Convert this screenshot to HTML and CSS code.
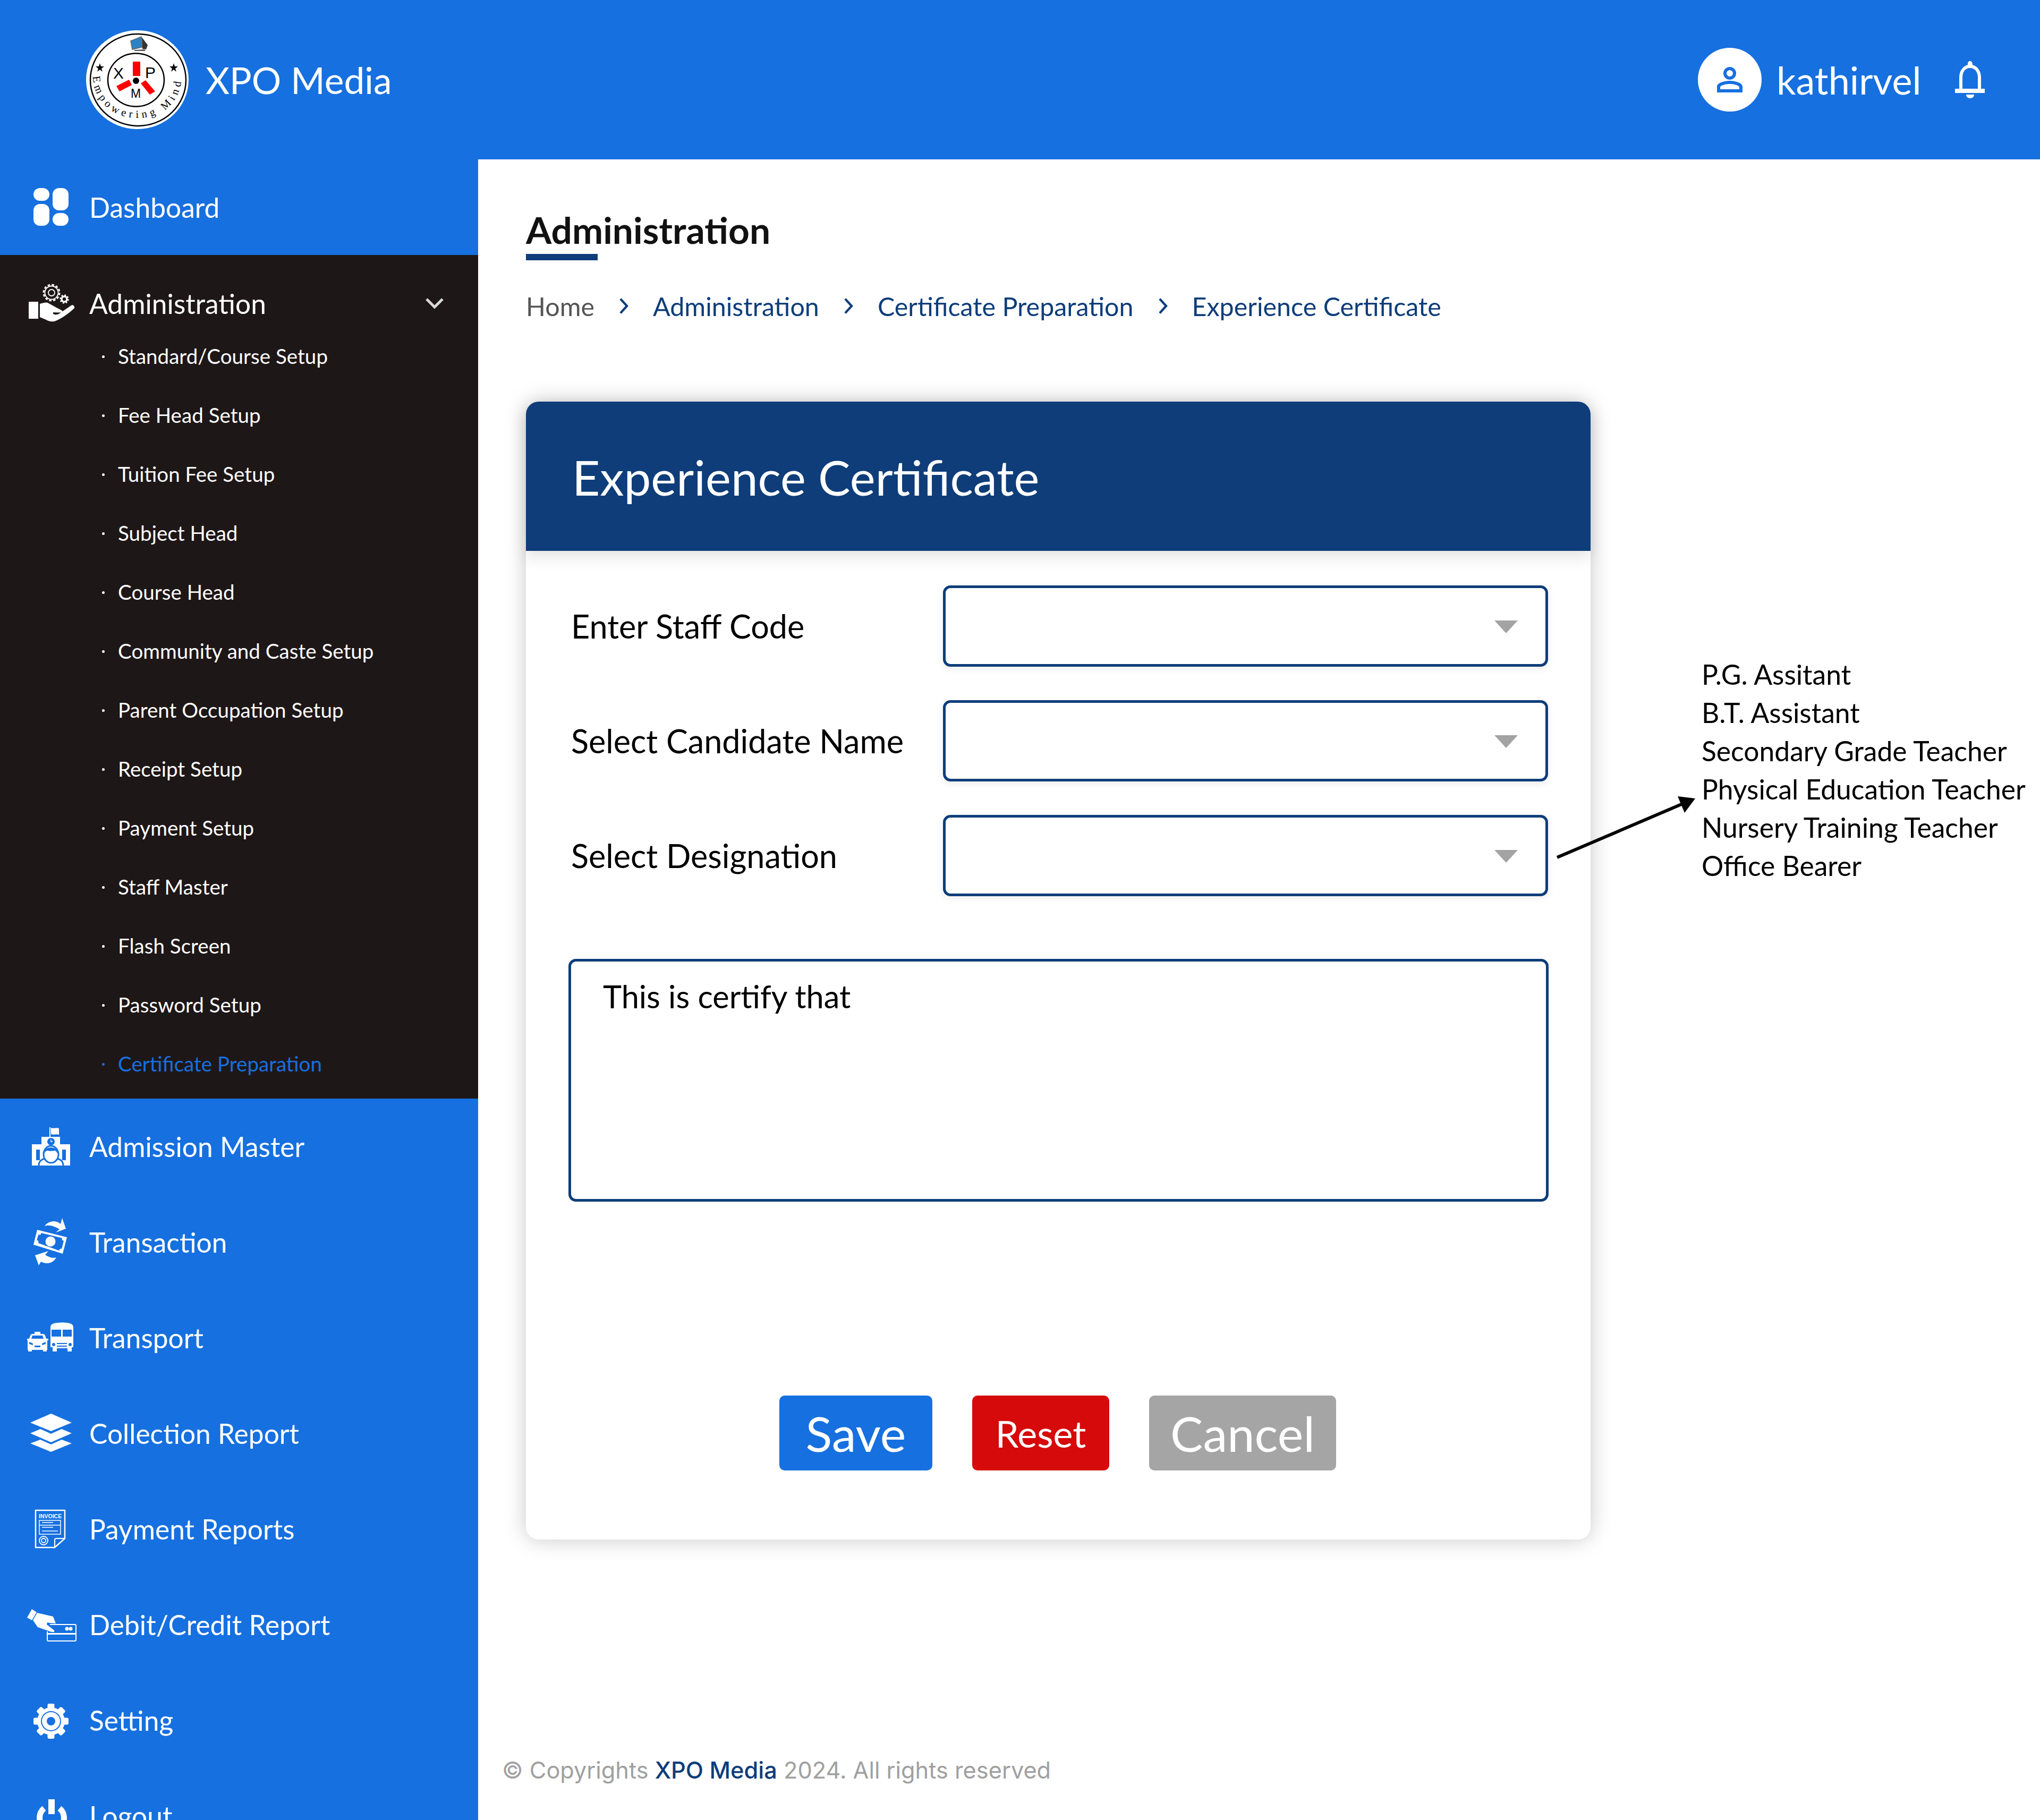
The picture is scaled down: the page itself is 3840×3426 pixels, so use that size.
FILE: index.html
```html
<!DOCTYPE html>
<html lang="en">
<head>
<meta charset="UTF-8" />
<meta name="viewport" content="width=device-width, initial-scale=1" />
<title>XPO Media - Experience Certificate</title>
<link rel="stylesheet" href="styles.css">
</head>
<body>

<header class="topbar">
  <div class="brand">
    <svg class="logo" viewBox="0 0 193 186">
      <defs>
        <path id="logoArc" d="M13 84 C13 134 50 165 97 165 C144 165 180 134 180 84" fill="none"/>
      </defs>
      <ellipse cx="96.5" cy="93" rx="96.5" ry="93" fill="#fff"/>
      <ellipse cx="98" cy="93.5" rx="90" ry="86.5" fill="none" stroke="#000" stroke-width="2.5"/>
      <ellipse cx="94" cy="93.5" rx="53" ry="50" fill="none" stroke="#000" stroke-width="2.5"/>
      <polygon points="84,20 104,12 105,32 87,36" fill="#2a83c9" stroke="#666" stroke-width="1.5"/>
      <polygon points="105,13 116,28 113,36 106,35" fill="#333"/>
      <polygon points="90,37 110,36 112,39 92,39" fill="#555"/>
      <polygon points="26,62 28,68 34,68 29,72 31,78 26,74 21,78 23,72 18,68 24,68" fill="#000"/>
      <polygon points="165,62 167,68 173,68 168,72 170,78 165,74 160,78 162,72 157,68 163,68" fill="#000"/>
      <rect x="88" y="59" width="14" height="27" fill="#f00"/>
      <polygon points="57,105 81,93 86,103 63,115" fill="#f00"/>
      <polygon points="103,100 112,94 130,115 120,121" fill="#f00"/>
      <circle cx="94" cy="95" r="6" fill="#000"/>
      <text class="logo-letter" x="51" y="91">X</text>
      <text class="logo-letter" x="111" y="90">P</text>
      <text class="logo-letter logo-m" x="84" y="127">M</text>
      <text class="logo-motto"><textPath href="#logoArc" startOffset="1%">Empowering Mind</textPath></text>
    </svg>
    <span class="brand-name">XPO Media</span>
  </div>
  <div class="user-box">
    <span class="avatar">
      <svg viewBox="0 0 48 48" width="48" height="48"><path d="M24 0a12 12 0 1 1 0 24a12 12 0 0 1 0-24zm0 6a6 6 0 1 0 0 12a6 6 0 0 0 0-12zM24 26c10 0 24 4 24 11v11H0V37c0-7 14-11 24-11zm0 6c-8 0-18 3-18 6v4h36v-4c0-3-10-6-18-6z" fill="#1670e0" fill-rule="evenodd"/></svg>
    </span>
    <span class="user-name">kathirvel</span>
    <svg class="bell" viewBox="0 0 56 70"><path d="M28 0c3 0 5 2 5 7c10 3 16 12 16 24v21h7v8H0v-8h8V31C8 19 14 10 24 7c0-5 1-7 4-7zm0 13c-9 0-14 8-14 18v21h29V31c0-10-5-18-15-18zM21 63h15c0 4-3 7-7.500 7s-7.500-3-7.500-7z" fill="#fff" fill-rule="evenodd"/></svg>
  </div>
</header>

<div class="layout">
  <nav class="sidebar">
    <a class="nav-item">
      <svg class="nav-icon" viewBox="0 0 90 90"><g fill="#fff"><rect x="13" y="9" width="30" height="24" rx="12"/><rect x="13" y="39" width="30" height="41" rx="12"/><rect x="49" y="9" width="30" height="42" rx="12"/><rect x="49" y="56" width="30" height="24" rx="12"/></g></svg>
      <span>Dashboard</span>
    </a>

    <div class="nav-group">
      <a class="nav-item nav-head">
        <svg class="nav-icon" viewBox="0 0 90 90">
          <rect x="4" y="42" width="18" height="32" fill="#fff"/>
          <path d="M25 46C31 44 36 43 40 44L58 54C64 57 69 59 67 61C66 63 56 62 50 62L50 65C56 68 60 65 62 64L84 49C87 47 91 50 90 54C80 64 62 76 52 79C46 80 40 78 37 76L25 71Z" fill="#fff"/>
          <g fill="none" stroke="#fff">
            <circle cx="47" cy="25" r="12.500" stroke-width="1.800"/>
            <circle cx="47" cy="25" r="15" stroke-width="3" stroke-dasharray="4.500 3.350"/>
            <circle cx="47" cy="25" r="6" stroke-width="1.800"/>
            <circle cx="71" cy="37" r="5" stroke-width="3.500"/>
            <circle cx="71" cy="37" r="7.500" stroke-width="2.500" stroke-dasharray="3 2.890"/>
          </g>
        </svg>
        <span>Administration</span>
        <svg class="chevron" viewBox="0 0 36 24"><path d="M3 4l15 15L33 4" fill="none" stroke="#d9d9d9" stroke-width="5"/></svg>
      </a>
      <ul class="sub-menu">
        <li>Standard/Course Setup</li>
        <li>Fee Head Setup</li>
        <li>Tuition Fee Setup</li>
        <li>Subject Head</li>
        <li>Course Head</li>
        <li>Community and Caste Setup</li>
        <li>Parent Occupation Setup</li>
        <li>Receipt Setup</li>
        <li>Payment Setup</li>
        <li>Staff Master</li>
        <li>Flash Screen</li>
        <li>Password Setup</li>
        <li class="current">Certificate Preparation</li>
      </ul>
    </div>

    <a class="nav-item">
      <svg class="nav-icon" viewBox="0 0 90 90">
        <rect x="43" y="9" width="2" height="27" fill="#fff"/>
        <path d="M46 10c5 2 10-1 15 1v12c-5-2-10 1-15-1z" fill="#fff"/>
        <path d="M28 27h35v14h19v40H10V41h18z" fill="#fff"/>
        <circle cx="46" cy="36" r="7" fill="#1670e0"/>
        <path d="M46 32v4h3" fill="none" stroke="#fff" stroke-width="1.300"/>
        <rect x="18" y="51" width="7" height="20" fill="#1670e0"/>
        <rect x="67" y="51" width="7" height="20" fill="#1670e0"/>
        <path d="M23 81c0-9 7-13 14-13h18c7 0 14 4 14 13" fill="#fff" stroke="#1670e0" stroke-width="3"/>
        <ellipse cx="46" cy="60" rx="14" ry="16" fill="#fff" stroke="#1670e0" stroke-width="3"/>
        <path d="M34 58c0-8 5-11 12-11s12 3 12 11c-2-3-3-5-5-5c-5 1-10 1-14 0c-2 0-4 2-5 5z" fill="#1670e0"/>
      </svg>
      <span>Admission Master</span>
    </a>
    <a class="nav-item">
      <svg class="nav-icon" viewBox="0 0 90 90">
        <g fill="#fff">
          <path d="M34 15C40 6 54 2 64 11L67 0L74 20L55 27L62 21C52 15 42 12 34 15Z"/>
          <path d="M56 74C50 85 38 88 27 82L23 89L16 70L41 62L35 69C42 74 50 76 56 74Z"/>
          <polygon points="20,22 76,36 68,67 13,50"/>
        </g>
        <polygon points="23.500,27 71,38.500 65,62.500 18,45.500" fill="#1670e0"/>
        <g fill="#fff">
          <circle cx="45" cy="44" r="9.500"/>
          <circle cx="24" cy="28" r="3.500"/>
          <circle cx="70" cy="39" r="3.500"/>
          <circle cx="65" cy="61" r="3.500"/>
          <circle cx="19" cy="45" r="3.500"/>
        </g>
      </svg>
      <span>Transaction</span>
    </a>
    <a class="nav-item">
      <svg class="nav-icon" viewBox="0 0 90 90">
        <path d="M45 26c0-5 3-7 7-8c9-2 22-2 29 0c4 1 7 3 7 8v37h-3v8h-8v-6H57v6h-8v-8h-4zM47 30v13h18V30zM68 30v13h17V30zM57 55v2h19v-2zM57 60v2h19v-2z" fill="#fff" fill-rule="evenodd"/>
        <circle cx="51" cy="58" r="3" fill="#1670e0"/>
        <circle cx="82" cy="58" r="3" fill="#1670e0"/>
        <path d="M15 34h11v4h5c2 0 3 1 4 3l2 6h4v3h-2v18h-1v3h-7v-3H10v3H3v-3H2V50H1v-3h4l2-6c1-2 2-3 4-3h4zM11 41l-2 6h23l-2-6zM5 53v4l7 2v-3zM36 53l-7 3v3l7-2zM15 60v3h11v-3z" fill="#fff" fill-rule="evenodd"/>
      </svg>
      <span>Transport</span>
    </a>
    <a class="nav-item">
      <svg class="nav-icon" viewBox="0 0 90 90"><g fill="#fff"><polygon points="46,8 85,25 46,41 7,25"/><polygon points="26,37 46,46 66,37 85,45 46,62 7,45"/><polygon points="26,57 46,66 66,57 85,64 46,80 7,64"/></g></svg>
      <span>Collection Report</span>
    </a>
    <a class="nav-item">
      <svg class="nav-icon" viewBox="0 0 90 90">
        <path d="M17 10h55v53L53 80H17z" fill="none" stroke="#fff" stroke-width="2.500" stroke-linejoin="round"/>
        <text class="invoice-text" x="23" y="25">INVOICE</text>
        <g fill="none" stroke="#fff">
          <rect x="24" y="29" width="40" height="26" stroke-width="1.500"/>
          <path d="M29 33h21M24 38h40M29 42h21M29 49h30" stroke-width="1.500"/>
          <circle cx="32" cy="67" r="8" stroke-width="1.800"/>
          <circle cx="32" cy="67" r="4" stroke-width="1.800"/>
          <path d="M53 80V66c0-2 1-3 3-3h16" stroke-width="2"/>
        </g>
      </svg>
      <span>Payment Reports</span>
    </a>
    <a class="nav-item">
      <svg class="nav-icon" viewBox="0 0 90 90">
        <polygon points="10,16 1,32 10,37 19,22" fill="#fff"/>
        <path d="M20 23L50 30L55 43L43 42L39 41L38 45L52 56C54 60 48 60 41 57L21 50L12 37Z" fill="#fff"/>
        <path d="M44 45H91C92 45 93 46 93 47V74C93 75 92 76 91 76H41C40 76 39 75 39 74V58" fill="none" stroke="#fff" stroke-width="2"/>
        <rect x="39" y="61" width="54" height="3" fill="#fff"/>
        <circle cx="76" cy="53" r="3.500" fill="#fff"/>
        <circle cx="83" cy="53" r="3.500" fill="#fff"/>
      </svg>
      <span>Debit/Credit Report</span>
    </a>
    <a class="nav-item">
      <svg class="nav-icon" viewBox="0 0 90 90">
        <g fill="#fff">
          <circle cx="46" cy="47" r="26"/>
          <rect x="39.500" y="14" width="13" height="66" rx="3"/>
          <rect x="39.500" y="14" width="13" height="66" rx="3" transform="rotate(45 46 47)"/>
          <rect x="39.500" y="14" width="13" height="66" rx="3" transform="rotate(90 46 47)"/>
          <rect x="39.500" y="14" width="13" height="66" rx="3" transform="rotate(135 46 47)"/>
        </g>
        <circle cx="46" cy="47" r="19" fill="#1670e0"/>
        <circle cx="46" cy="47" r="17" fill="#fff"/>
        <circle cx="46" cy="47" r="8" fill="#1670e0"/>
      </svg>
      <span>Setting</span>
    </a>
    <a class="nav-item">
      <svg class="nav-icon" viewBox="0 0 90 90"><path d="M33 31A23 23 0 1 0 62 31" fill="none" stroke="#fff" stroke-width="11"/><rect x="41" y="14" width="12" height="28" fill="#fff"/></svg>
      <span>Logout</span>
    </a>
  </nav>

  <main class="content">
    <h1 class="page-title">Administration</h1>
    <div class="breadcrumb">
      <span class="crumb-home">Home</span>
      <svg class="crumb-sep" viewBox="0 0 16 28"><path d="M3 3l10 11L3 25" fill="none" stroke="#0e3d7a" stroke-width="3.500"/></svg>
      <span>Administration</span>
      <svg class="crumb-sep" viewBox="0 0 16 28"><path d="M3 3l10 11L3 25" fill="none" stroke="#0e3d7a" stroke-width="3.500"/></svg>
      <span>Certificate Preparation</span>
      <svg class="crumb-sep" viewBox="0 0 16 28"><path d="M3 3l10 11L3 25" fill="none" stroke="#0e3d7a" stroke-width="3.500"/></svg>
      <span>Experience Certificate</span>
    </div>

    <div class="work-area">
      <section class="card">
        <h2 class="card-title">Experience Certificate</h2>
        <div class="card-body">
          <div class="form-row">
            <label>Enter Staff Code</label>
            <div class="select-box"><i class="caret"></i></div>
          </div>
          <div class="form-row">
            <label>Select Candidate Name</label>
            <div class="select-box"><i class="caret"></i></div>
          </div>
          <div class="form-row">
            <label>Select Designation</label>
            <div class="select-box"><i class="caret"></i></div>
          </div>
          <div class="text-box">This is certify that</div>
          <div class="actions">
            <button class="btn btn-save">Save</button>
            <button class="btn btn-reset">Reset</button>
            <button class="btn btn-cancel">Cancel</button>
          </div>
        </div>
      </section>

      <svg class="note-arrow" viewBox="0 0 270 120"><path d="M6 115L240 15" stroke="#000" stroke-width="6" fill="none"/><polygon points="266,4 233,0 246,31" fill="#000"/></svg>

      <ul class="designations">
        <li>P.G. Assitant</li>
        <li>B.T. Assistant</li>
        <li>Secondary Grade Teacher</li>
        <li>Physical Education Teacher</li>
        <li>Nursery Training Teacher</li>
        <li>Office Bearer</li>
      </ul>
    </div>

    <footer class="copyright">© Copyrights <b>XPO Media</b> 2024. All rights reserved</footer>
  </main>
</div>

</body>
</html>
```

FILE: styles.css
```css
html, body {
  margin: 0;
  height: 3426px;
  overflow: hidden;
}
body {
  font-family: Lato, "Open Sans", sans-serif;
  background: #fff;
  color: #000;
}

/* top bar */
.topbar {
  height: 300px;
  background: #1670e0;
  display: flex;
  justify-content: space-between;
  align-items: center;
  color: #fff;
}
.brand {
  display: flex;
  align-items: center;
  padding-left: 162px;
  gap: 32px;
}
.logo {
  width: 193px;
  height: 186px;
}
.logo-letter {
  font-family: "Liberation Sans", sans-serif;
  font-size: 30px;
}
.logo-m {
  font-size: 23px;
}
.logo-motto {
  font-family: "Liberation Serif", serif;
  font-size: 20.5px;
  letter-spacing: 6.4px;
}
.brand-name {
  font-size: 69.5px;
}
.user-box {
  display: flex;
  align-items: center;
  padding-right: 104px;
}
.avatar {
  width: 120px;
  height: 120px;
  border-radius: 50%;
  background: #fff;
  display: flex;
  align-items: center;
  justify-content: center;
}
.user-name {
  font-size: 72px;
  margin-left: 27.5px;
  margin-right: 63.5px;
}
.bell {
  width: 56px;
  height: 70px;
}

/* sidebar */
.layout {
  display: flex;
  height: 3126px;
}
.sidebar {
  width: 900px;
  flex: none;
  background: #1670e0;
  color: #fff;
  overflow: hidden;
}
.nav-item {
  display: flex;
  align-items: center;
  height: 180px;
  font-size: 51.5px;
}
.nav-icon {
  width: 90px;
  height: 90px;
  margin-left: 50px;
  margin-right: 28px;
  flex: none;
  overflow: visible;
}
.nav-group {
  background: #1e1717;
  padding-bottom: 10px;
}
.nav-head {
  height: 182px;
}
.chevron {
  width: 36px;
  height: 24px;
  margin-left: auto;
  margin-right: 64px;
}
.sub-menu {
  list-style: none;
  margin: -47px 0 0;
  padding: 0 0 0 222px;
  font-size: 38.6px;
}
.sub-menu li {
  height: 111px;
  line-height: 111px;
  position: relative;
}
.sub-menu li::before {
  content: "";
  position: absolute;
  left: -30px;
  top: 54px;
  width: 5px;
  height: 5px;
  border-radius: 50%;
  background: currentColor;
}
.sub-menu .current {
  color: #1670e0;
}
.invoice-text {
  font-family: "Liberation Sans", sans-serif;
  font-weight: bold;
  font-size: 10.5px;
  fill: #fff;
}

/* main column */
.content {
  flex: 1;
  padding: 90px 0 0 90px;
  position: relative;
}
.page-title {
  display: inline-block;
  margin: 0;
  font-size: 69.5px;
  font-weight: 700;
  line-height: 84px;
  position: relative;
  padding-bottom: 16px;
  color: #111;
}
.page-title::after {
  content: "";
  position: absolute;
  left: 0;
  bottom: 0;
  width: 135px;
  height: 12px;
  background: #0e3d7a;
}
.breadcrumb {
  display: flex;
  align-items: center;
  margin-top: 55px;
  font-size: 48.4px;
  line-height: 62px;
  color: #0e3d7a;
}
.crumb-home {
  color: #555;
}
.crumb-sep {
  width: 20px;
  height: 34px;
  margin: 0 45px;
}
.work-area {
  margin-top: 149px;
  position: relative;
}
.card {
  width: 2004px;
  height: 2142px;
  border-radius: 24px;
  box-shadow: 0 0 40px rgba(0, 0, 0, 0.22);
  background: #fff;
}
.card-title {
  margin: 0;
  height: 281px;
  line-height: 283px;
  padding-left: 87px;
  font-size: 90.7px;
  font-weight: 400;
  color: #fff;
  background: #0e3d7a;
  border-radius: 24px 24px 0 0;
  box-shadow: 0 10px 30px rgba(0, 0, 0, 0.12);
}
.card-body {
  padding: 65px 80px 0 80px;
}
.form-row {
  display: flex;
  align-items: center;
  height: 153px;
  margin-bottom: 63px;
}
.form-row label {
  box-sizing: border-box;
  width: 705px;
  padding-left: 5px;
  font-size: 61.2px;
}
.select-box {
  flex: 1;
  height: 153px;
  box-sizing: border-box;
  border: 5px solid #0e3d7a;
  border-radius: 14px;
  box-shadow: 0 4px 14px rgba(0, 0, 0, 0.08);
  position: relative;
}
.caret {
  position: absolute;
  right: 52px;
  top: 61px;
  border-left: 22px solid transparent;
  border-right: 22px solid transparent;
  border-top: 24px solid #a3a3a3;
}
.text-box {
  box-sizing: border-box;
  width: 1845px;
  height: 457px;
  margin-top: 118px;
  padding: 27px 60px;
  border: 5px solid #0e3d7a;
  border-radius: 14px;
  font-size: 59.5px;
  line-height: 76px;
}
.actions {
  display: flex;
  gap: 75px;
  margin-top: 365px;
  padding-left: 397px;
}
.btn {
  height: 141px;
  border: none;
  border-radius: 10px;
  color: #fff;
  font-family: inherit;
  padding: 0;
}
.btn-save {
  width: 288px;
  background: #1670e0;
  font-size: 92px;
}
.btn-reset {
  width: 258px;
  background: #d60a0a;
  font-size: 70px;
}
.btn-cancel {
  width: 352px;
  background: #a5a5a5;
  font-size: 92px;
}

/* annotation next to the card */
.note-arrow {
  position: absolute;
  left: 1935px;
  top: 743px;
  width: 270px;
  height: 120px;
}
.designations {
  position: absolute;
  left: 2213px;
  top: 477px;
  margin: 0;
  padding: 0;
  list-style: none;
  font-size: 51.6px;
  line-height: 72px;
  white-space: nowrap;
}

.copyright {
  position: absolute;
  left: 45px;
  top: 3006px;
  font-family: Inter, sans-serif;
  font-size: 43.3px;
  color: #a0a0a0;
  white-space: nowrap;
}
.copyright b {
  font-weight: 500;
  color: #0e3d7a;
}
```
